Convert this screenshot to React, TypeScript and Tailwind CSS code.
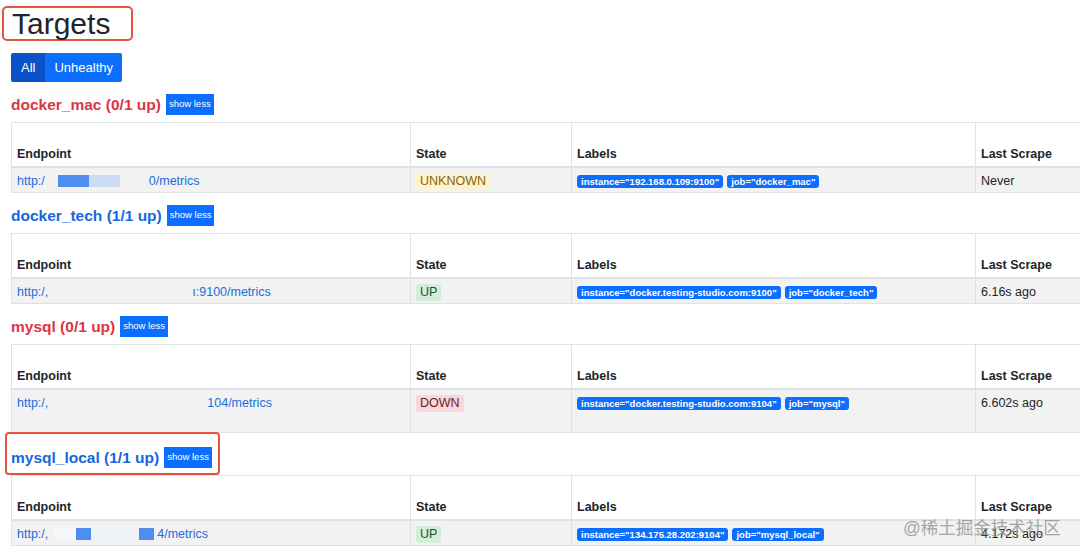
import React from "react";

type Row = {
  name: string;
  up: string;
  healthy: boolean;
  endpoint: React.ReactNode;
  state: "UP" | "DOWN" | "UNKNOWN";
  labels: string[];
  last: string;
  tall?: boolean;
  boxed?: boolean;
};

const Blank = ({ w, c }: { w: number; c?: string }) => (
  <span
    className="inline-block h-[12px] align-middle"
    style={{ width: w, backgroundColor: c ?? "transparent" }}
  />
);

const rows: Row[] = [
  {
    name: "docker_mac",
    up: "0/1 up",
    healthy: false,
    endpoint: (
      <>
        http:/
        <Blank w={13} />
        <Blank w={31} c="#4d8ef0" />
        <Blank w={31} c="#cbdcf3" />
        <Blank w={17} />
        <Blank w={12} c="#eef2f8" />
        0/metrics
      </>
    ),
    state: "UNKNOWN",
    labels: ['instance="192.168.0.109:9100"', 'job="docker_mac"'],
    last: "Never",
  },
  {
    name: "docker_tech",
    up: "1/1 up",
    healthy: true,
    endpoint: (
      <>
        http:/,
        <Blank w={144} />
        ı:9100/metrics
      </>
    ),
    state: "UP",
    labels: ['instance="docker.testing-studio.com:9100"', 'job="docker_tech"'],
    last: "6.16s ago",
  },
  {
    name: "mysql",
    up: "0/1 up",
    healthy: false,
    endpoint: (
      <>
        http:/,
        <Blank w={159} />
        104/metrics
      </>
    ),
    state: "DOWN",
    labels: ['instance="docker.testing-studio.com:9104"', 'job="mysql"'],
    last: "6.602s ago",
    tall: true,
  },
  {
    name: "mysql_local",
    up: "1/1 up",
    healthy: true,
    endpoint: (
      <>
        http:/,
        <Blank w={6} />
        <Blank w={22} c="#f6f7f9" />
        <Blank w={15} c="#4d8ef0" />
        <Blank w={48} c="#eef1f5" />
        <Blank w={15} c="#4d8ef0" />
        <Blank w={3} />
        4/metrics
      </>
    ),
    state: "UP",
    labels: ['instance="134.175.28.202:9104"', 'job="mysql_local"'],
    last: "4.172s ago",
    boxed: true,
  },
];

function StateBadge({ s }: { s: Row["state"] }) {
  const cls =
    s === "UP"
      ? "bg-[#d4edda] text-[#155724]"
      : s === "DOWN"
      ? "bg-[#f8d7da] text-[#721c24]"
      : "bg-[#fff3cd] text-[#856404]";
  return (
    <span className={`inline-block rounded-[3px] px-[4px] leading-[17px] ${cls}`}>
      {s}
    </span>
  );
}

function Section({ r, first }: { r: Row; first: boolean }) {
  return (
    <div className={first ? "mt-[12px]" : r.boxed ? "mt-[14px]" : "mt-[12px]"}>
      <div className="relative flex h-[21px] items-center gap-[5px]">
        <span
          className={`text-[15.5px] font-bold leading-[21px] ${
            r.healthy ? "text-[#1467e0]" : "text-[#dc3545]"
          }`}
        >
          {r.name} ({r.up})
        </span>
        <span className="flex h-[21px] items-center bg-[#0b6efd] px-[3px] text-[9.5px] text-white">
          show less
        </span>
        {r.boxed && (
          <span className="pointer-events-none absolute left-[-6px] top-[-15px] h-[43px] w-[215px] rounded-[4px] border-2 border-[#e5533c]" />
        )}
      </div>
      <table className="mt-[7px] w-[1134px] table-fixed border-collapse text-[12.5px] text-[#212529]">
        <colgroup>
          <col className="w-[399px]" />
          <col className="w-[161px]" />
          <col className="w-[404px]" />
          <col className="w-[170px]" />
        </colgroup>
        <thead>
          <tr className="h-[44px]">
            {["Endpoint", "State", "Labels", "Last Scrape"].map((h) => (
              <th
                key={h}
                className="border border-b-2 border-[#dee2e6] px-[5px] pb-[3px] text-left align-bottom font-bold leading-[18px]"
              >
                {h}
              </th>
            ))}
          </tr>
        </thead>
        <tbody>
          <tr className={`bg-[#f2f2f2] ${r.tall ? "h-[44px]" : "h-[26px]"}`}>
            <td className="whitespace-nowrap border border-[#dee2e6] px-[5px] pt-[4px] align-top leading-[18px] text-[#1a6ddb]">
              {r.endpoint}
            </td>
            <td className="border border-[#dee2e6] px-[5px] pt-[4px] align-top leading-[18px]">
              <StateBadge s={r.state} />
            </td>
            <td className="border border-[#dee2e6] px-[5px] pt-[7px] align-top">
              <div className="flex gap-[4px]">
                {r.labels.map((l) => (
                  <span
                    key={l}
                    className="rounded-[3px] bg-[#0b6efd] px-[4px] text-[9.5px] font-bold leading-[13px] text-white"
                  >
                    {l}
                  </span>
                ))}
              </div>
            </td>
            <td className="border border-[#dee2e6] px-[5px] pt-[4px] align-top leading-[18px]">
              {r.last}
            </td>
          </tr>
        </tbody>
      </table>
    </div>
  );
}

export default function App() {
  return (
    <div className="relative h-[553px] w-[1080px] overflow-hidden bg-white font-['Liberation_Sans','Noto_Sans_CJK_SC',sans-serif] text-[#212529]">
      <div className="px-[11px]">
        <div className="ml-[-9px] mt-[6px] h-[35px] w-[131px] rounded-[5px] border-2 border-[#e5533c] pl-[8px] text-[30px] leading-[31px] text-[#212529]">
          Targets
        </div>
        <div className="mt-[12px] flex h-[29px] text-[13px] text-white">
          <span className="flex items-center rounded-l-[2px] bg-[#0a52c7] px-[10px]">All</span>
          <span className="flex items-center rounded-r-[2px] bg-[#0b6efd] px-[9px]">Unhealthy</span>
        </div>
        {rows.map((r, i) => (
          <Section key={r.name} r={r} first={i === 0} />
        ))}
      </div>
      <div className="absolute left-[903px] top-[517px] text-[17.5px] leading-[22px] text-[#8c8c8c] opacity-75">
        @稀土掘金技术社区
      </div>
    </div>
  );
}
